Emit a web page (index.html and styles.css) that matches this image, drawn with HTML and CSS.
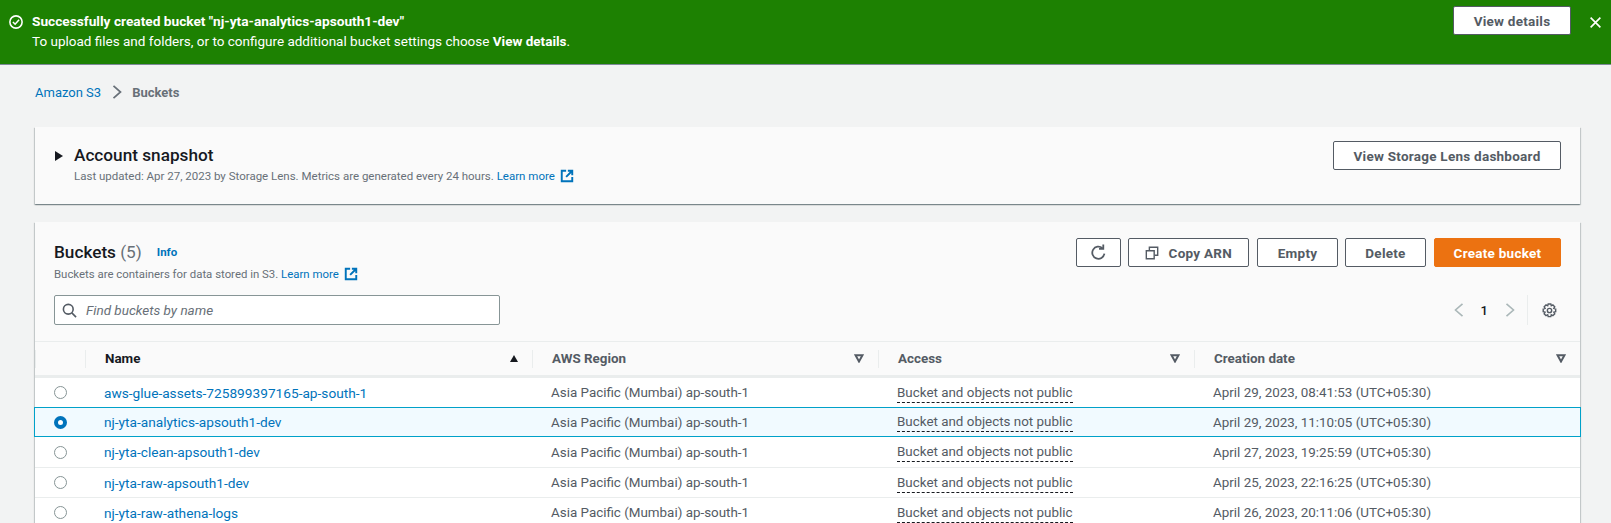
FILE: index.html
```html
<!DOCTYPE html>
<html lang="en">
<head>
    <meta charset="UTF-8">
    <title>S3 Buckets</title>
    <link rel="stylesheet" href="styles.css">
</head>
<body>

    <div class="banner">
        <svg class="banner-icon" viewBox="0 0 16 16"><circle cx="8" cy="8" r="7"/><path d="M4.500 8l2.500 2.500 4.500-5"/></svg>
        <div class="banner-text">
            <div class="banner-title">Successfully created bucket "nj-yta-analytics-apsouth1-dev"</div>
            <div>To upload files and folders, or to configure additional bucket settings choose <b>View details</b>.</div>
        </div>
        <button class="btn btn-white">View details</button>
        <svg class="banner-close" viewBox="0 0 16 16"><path d="M2 2l12 12M14 2L2 14"/></svg>
    </div>

    <div class="content">
        <div class="crumbs">
            <a class="link">Amazon S3</a>
            <svg class="crumb-sep" viewBox="0 0 10 14"><path d="M1.500 0.800L8.500 7l-7 6.200"/></svg>
            <span class="crumb-current">Buckets</span>
        </div>

        <div class="card snapshot">
            <div class="snapshot-caret"></div>
            <div class="snapshot-text">
                <h2>Account snapshot</h2>
                <p class="sub">Last updated: Apr 27, 2023 by Storage Lens. Metrics are generated every 24 hours. <a class="link">Learn more</a>
                    <svg class="ext" viewBox="0 0 16 16"><path d="M7 2H2v12h12V9"/><path d="M9 2h5v5M14 2L7 9"/></svg>
                </p>
            </div>
            <button class="btn">View Storage Lens dashboard</button>
        </div>

        <div class="card buckets">
            <div class="buckets-head">
                <div class="buckets-title">
                    <div class="title-row">
                        <h2>Buckets <span class="count">(5)</span></h2>
                        <a class="info">Info</a>
                    </div>
                    <p class="sub">Buckets are containers for data stored in S3. <a class="link">Learn more</a>
                        <svg class="ext" viewBox="0 0 16 16"><path d="M7 2H2v12h12V9"/><path d="M9 2h5v5M14 2L7 9"/></svg>
                    </p>
                </div>
                <div class="actions">
                    <button class="btn btn-icon">
                        <svg viewBox="0 0 16 16"><path d="M13.500 9a5.700 5.700 0 1 1-1.800-5"/><path d="M12.500 0.500V4.500H8.500"/></svg>
                    </button>
                    <button class="btn btn-copy">
                        <svg viewBox="0 0 16 16"><path d="M1.500 5.500h9v9h-9z"/><path d="M5 5V1.500h9.500v9H11"/></svg>
                        Copy ARN
                    </button>
                    <button class="btn btn-empty">Empty</button>
                    <button class="btn btn-delete">Delete</button>
                    <button class="btn btn-primary">Create bucket</button>
                </div>
            </div>

            <div class="tools">
                <div class="search">
                    <svg viewBox="0 0 16 16"><circle cx="6.700" cy="6.700" r="5.200"/><path d="M10.500 10.500L15 15"/></svg>
                    <span>Find buckets by name</span>
                </div>
                <div class="pager">
                    <svg class="pager-arrow" viewBox="0 0 10 14"><path d="M8.500 0.800L1.500 7l7 6.200"/></svg>
                    <span class="pager-num">1</span>
                    <svg class="pager-arrow" viewBox="0 0 10 14"><path d="M1.500 0.800L8.500 7l-7 6.200"/></svg>
                    <span class="pager-line"></span>
                    <svg class="gear" viewBox="0 0 16 16"><circle cx="8" cy="8" r="2.300"/><path d="M6.600 1h2.800l.5 2 1.700-.9 2 2-1 1.700 2 .6v2.800l-2 .5 1 1.800-2 2-1.700-1-.5 2H6.600l-.5-2-1.800 1-2-2 1-1.800-2-.5V6.400l2-.6-1-1.700 2-2 1.800.9z"/></svg>
                </div>
            </div>

            <div class="row row-head">
                <div class="cell cell-radio"></div>
                <div class="cell"><b class="th-dark">Name</b><span class="sort-up"></span></div>
                <div class="cell"><b>AWS Region</b><svg class="sort-down" viewBox="0 0 10 9"><path d="M1.500 1.200h7L5 7.500z"/></svg></div>
                <div class="cell"><b>Access</b><svg class="sort-down" viewBox="0 0 10 9"><path d="M1.500 1.200h7L5 7.500z"/></svg></div>
                <div class="cell"><b>Creation date</b><svg class="sort-down" viewBox="0 0 10 9"><path d="M1.500 1.200h7L5 7.500z"/></svg></div>
            </div>

            <div class="row">
                <div class="cell-radio"><span class="radio"></span></div>
                <div class="cell"><a class="link">aws-glue-assets-725899397165-ap-south-1</a></div>
                <div class="cell">Asia Pacific (Mumbai) ap-south-1</div>
                <div class="cell"><span class="dashed">Bucket and objects not public</span></div>
                <div class="cell">April 29, 2023, 08:41:53 (UTC+05:30)</div>
            </div>
            <div class="row row-selected">
                <div class="cell-radio"><span class="radio radio-on"></span></div>
                <div class="cell"><a class="link">nj-yta-analytics-apsouth1-dev</a></div>
                <div class="cell">Asia Pacific (Mumbai) ap-south-1</div>
                <div class="cell"><span class="dashed">Bucket and objects not public</span></div>
                <div class="cell">April 29, 2023, 11:10:05 (UTC+05:30)</div>
            </div>
            <div class="row">
                <div class="cell-radio"><span class="radio"></span></div>
                <div class="cell"><a class="link">nj-yta-clean-apsouth1-dev</a></div>
                <div class="cell">Asia Pacific (Mumbai) ap-south-1</div>
                <div class="cell"><span class="dashed">Bucket and objects not public</span></div>
                <div class="cell">April 27, 2023, 19:25:59 (UTC+05:30)</div>
            </div>
            <div class="row">
                <div class="cell-radio"><span class="radio"></span></div>
                <div class="cell"><a class="link">nj-yta-raw-apsouth1-dev</a></div>
                <div class="cell">Asia Pacific (Mumbai) ap-south-1</div>
                <div class="cell"><span class="dashed">Bucket and objects not public</span></div>
                <div class="cell">April 25, 2023, 22:16:25 (UTC+05:30)</div>
            </div>
            <div class="row">
                <div class="cell-radio"><span class="radio"></span></div>
                <div class="cell"><a class="link">nj-yta-raw-athena-logs</a></div>
                <div class="cell">Asia Pacific (Mumbai) ap-south-1</div>
                <div class="cell"><span class="dashed">Bucket and objects not public</span></div>
                <div class="cell">April 26, 2023, 20:11:06 (UTC+05:30)</div>
            </div>
        </div>
    </div>

</body>
</html>
```

FILE: styles.css
```css
html, body {
    margin: 0;
    height: 523px;
    overflow: hidden;
}
body {
    font-family: Roboto, "Liberation Sans", sans-serif;
    font-size: 13.5px;
    color: #16191f;
    background-color: #f2f3f3;
}
svg {
    fill: none;
    stroke: currentColor;
    stroke-width: 2;
}
h2 {
    margin: 0;
    font-size: 17.2px;
    font-weight: 500;
    line-height: 22px;
}
.link {
    color: #0073bb;
}
.sub {
    margin: 0;
    font-size: 11.5px;
    line-height: 16px;
    color: #687078;
}
.ext {
    width: 14px;
    height: 14px;
    color: #0073bb;
    vertical-align: -3px;
    margin-left: 2px;
    stroke-width: 2.200;
}

/* banner */
.banner {
    display: flex;
    height: 65px;
    box-sizing: border-box;
    padding: 6px 9px 0 9px;
    background-color: #1d8102;
    border-bottom: 1px solid #7d8998;
    color: #fff;
}
.banner-icon {
    width: 14px;
    height: 14px;
    margin-top: 9px;
    stroke-width: 1.800;
}
.banner-text {
    flex: 1;
    margin-left: 9px;
    margin-top: 5px;
    line-height: 20px;
}
.banner-title {
    font-weight: 700;
    font-size: 13.7px;
}
.banner-close {
    width: 13px;
    height: 13px;
    margin: 10px 0 0 18px;
    stroke-width: 2;
}

/* buttons */
.btn {
    height: 29px;
    padding: 0;
    font-family: inherit;
    font-size: 13.5px;
    font-weight: 700;
    letter-spacing: .25px;
    color: #545b64;
    background-color: #fff;
    border: 1px solid #545b64;
    border-radius: 2px;
}
.btn-white {
    width: 118px;
}
.btn-icon {
    width: 45px;
}
.btn-icon svg {
    width: 17px;
    height: 17px;
    vertical-align: -4px;
    stroke-width: 1.700;
}
.btn-copy {
    width: 121px;
}
.btn-copy svg {
    width: 14px;
    height: 14px;
    margin-right: 6px;
    vertical-align: -2px;
    stroke-width: 1.600;
}
.btn-empty {
    width: 81px;
    margin-left: 1px;
}
.btn-delete {
    width: 81px;
}
.btn-primary {
    width: 127px;
    margin-left: 1px;
    color: #fff;
    background-color: #ec7211;
    border-color: #ec7211;
}

/* page */
.content {
    padding: 0 31px 0 35px;
}
.crumbs {
    display: flex;
    align-items: center;
    height: 54px;
    padding-bottom: 8px;
    font-size: 13px;
}
.crumb-sep {
    width: 10px;
    height: 14px;
    margin: 0 10px 0 11px;
    color: #687078;
    stroke-width: 1.700;
}
.crumb-current {
    font-weight: 700;
    color: #687078;
}
.card {
    background-color: #fafafa;
    box-shadow: 0 1px 1px 0 rgba(0,28,36,.3), 1px 1px 1px 0 rgba(0,28,36,.15), -1px 1px 1px 0 rgba(0,28,36,.15);
}
.snapshot {
    display: flex;
    align-items: flex-start;
    height: 77px;
    box-sizing: border-box;
    padding: 14px 19px 0 20px;
}
.snapshot-caret {
    width: 0;
    height: 0;
    margin-top: 10px;
    border-style: solid;
    border-width: 5px 0 5px 8px;
    border-color: transparent transparent transparent #16191f;
}
.snapshot-text {
    flex: 1;
    margin: 3px 0 0 11px;
}
.snapshot-text .sub {
    margin-top: 2px;
}
.snapshot .btn {
    width: 228px;
}

/* buckets table */
.buckets {
    margin-top: 18px;
}
.buckets .sub {
    font-size: 11.4px;
}
.buckets-head {
    display: flex;
    justify-content: space-between;
    padding: 16px 19px 0 19px;
}
.buckets-title {
    margin-top: 3px;
}
.title-row {
    display: flex;
    align-items: center;
    gap: 15px;
    margin-bottom: 3px;
}
.count {
    font-weight: 400;
    color: #687078;
}
.info {
    font-size: 11.5px;
    font-weight: 700;
    color: #0073bb;
}
.actions {
    display: flex;
    gap: 7px;
}
.tools {
    display: flex;
    justify-content: space-between;
    align-items: center;
    height: 30px;
    padding: 0 23px 0 19px;
    margin-top: 13px;
}
.search {
    display: flex;
    align-items: center;
    gap: 9px;
    width: 446px;
    height: 30px;
    box-sizing: border-box;
    padding-left: 7px;
    background-color: #fff;
    border: 1px solid #879596;
    border-radius: 2px;
    font-style: italic;
    color: #687078;
}
.search svg {
    width: 15px;
    height: 15px;
    color: #545b64;
    stroke-width: 1.700;
}
.pager {
    display: flex;
    align-items: center;
    color: #aab7b8;
}
.pager-arrow {
    width: 10px;
    height: 14px;
    stroke-width: 1.600;
}
.pager-num {
    margin: 0 17px;
    font-weight: 500;
    font-size: 13px;
    color: #16191f;
}
.pager-line {
    width: 1px;
    height: 30px;
    margin: 0 14px 0 12px;
    background-color: #eaeded;
}
.gear {
    width: 15px;
    height: 15px;
    color: #545b64;
    stroke-width: 1.500;
}

.row {
    display: grid;
    grid-template-columns: 50px 447px 346px 316px 386px;
    align-items: center;
    height: 30px;
    box-sizing: border-box;
    background-color: #fff;
    border-bottom: 1px solid #eaeded;
    color: #545b64;
    font-size: 13.4px;
}
.row .link {
    font-size: 13.7px;
}
.row-head {
    height: 37px;
    margin-top: 16px;
    background-color: #fafafa;
    border-top: 1px solid #eaeded;
    border-bottom: 3px solid #eaeded;
}
.row-head b {
    font-weight: 700;
    font-size: 13.4px;
    color: #545b64;
}
.row-head b.th-dark {
    color: #16191f;
}
.row-head .cell {
    display: flex;
    justify-content: space-between;
    align-items: center;
    height: 18px;
    border-left: 1px solid #eaeded;
}
.row-selected {
    position: relative;
    height: 30px;
    margin-top: -1px;
    background-color: #f1faff;
    border-top: 1px solid #00a1c9;
    border-bottom: 1px solid #00a1c9;
    box-shadow: -1px 0 0 #00a1c9, 1px 0 0 #00a1c9;
}
.row-selected + .row {
    height: 31px;
}
.cell {
    padding: 0 14px 0 19px;
    white-space: nowrap;
}
.cell-radio {
    display: flex;
    padding-left: 19px;
}
.radio {
    width: 11px;
    height: 11px;
    background-color: #fff;
    border: 1px solid #879596;
    border-radius: 50%;
}
.radio-on {
    box-sizing: border-box;
    width: 13px;
    height: 13px;
    border: 4px solid #0073bb;
}
.dashed {
    display: inline-block;
    line-height: 19px;
    border-bottom: 1px dashed #16191f;
}
.sort-up {
    width: 0;
    height: 0;
    border-style: solid;
    border-color: transparent;
    border-width: 0 4.500px 7px 4.500px;
    border-bottom-color: #16191f;
}
.sort-down {
    width: 10px;
    height: 9px;
    color: #545b64;
    stroke-width: 2;
}
```
